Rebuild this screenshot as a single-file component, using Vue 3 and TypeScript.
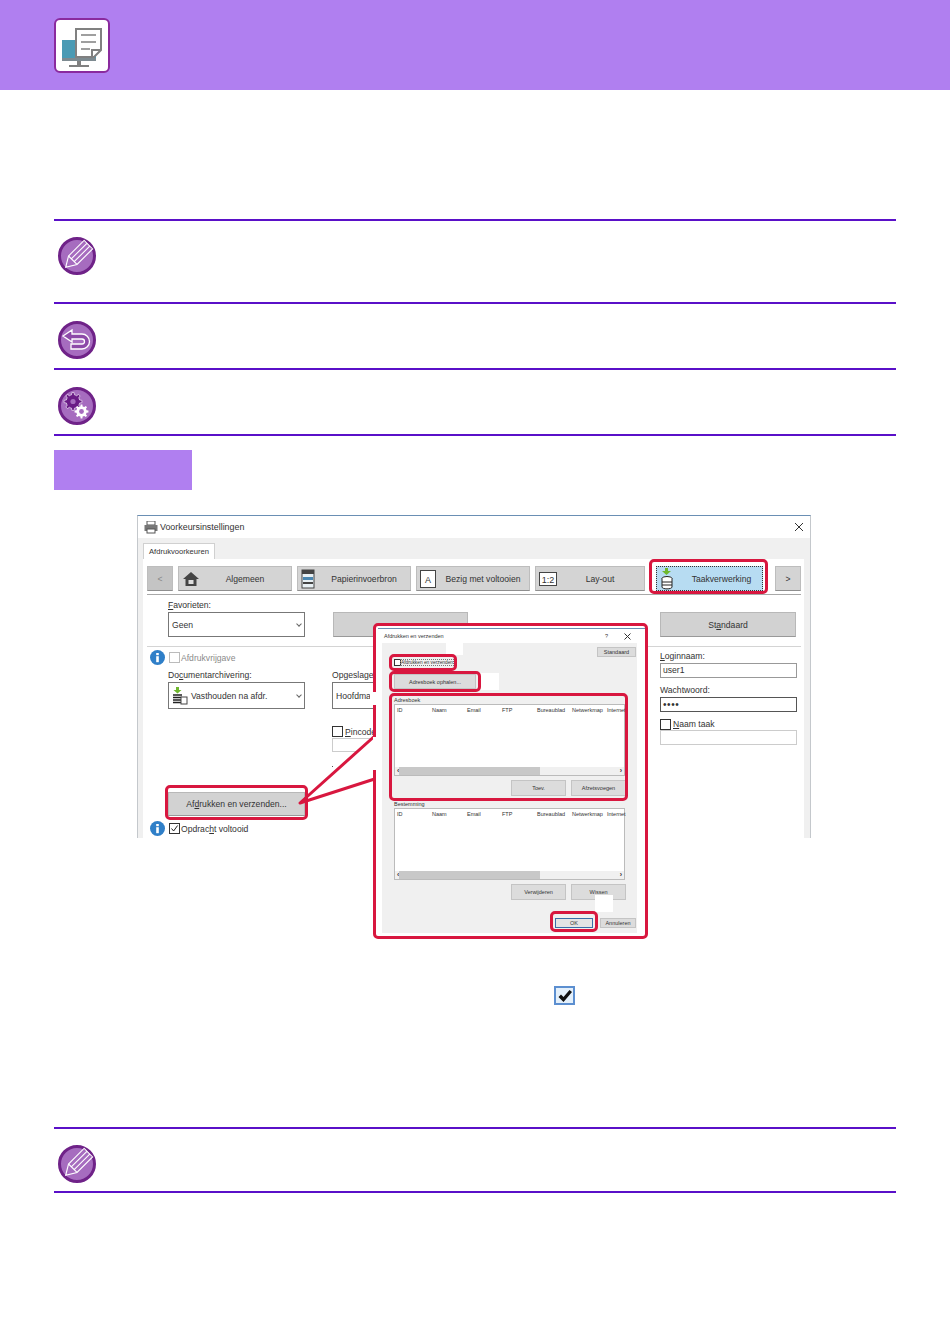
<template>
  <div class="page">
    <header class="topbar">
      <div class="topbar-icon">
        <svg width="52" height="52" viewBox="0 0 52 52">
          <rect x="6" y="20" width="34" height="20" fill="#4a9ab4" />
          <rect x="6" y="38" width="34" height="3" fill="#7d8a90" />
          <rect x="21" y="41" width="4" height="4" fill="#808080" />
          <rect x="13" y="45" width="20" height="2" fill="#808080" />
          <path d="M20 9H45V30L38 37H20Z" fill="#fff" stroke="#808080" stroke-width="2" />
          <path d="M25 15H40M25 22H40M25 29H34" stroke="#808080" stroke-width="1.6" />
          <path d="M36 37V30H45" fill="none" stroke="#808080" stroke-width="2" />
        </svg>
      </div>
    </header>

    <main class="content">
      <section class="note note-tall">
        <svg class="badge" viewBox="0 0 38 38">
          <circle cx="19" cy="19" r="17.5" fill="#a66cbf" stroke="#6f2288" stroke-width="3" />
          <g transform="rotate(45 19 19)" fill="none" stroke="#fff" stroke-width="1.1">
            <path d="M13 3H25V25L19 35L13 25Z" />
            <path d="M17 3V25M21 3V25M13 25H25" />
          </g>
        </svg>
      </section>
      <section class="note">
        <svg class="badge" viewBox="0 0 38 38">
          <circle cx="19" cy="19" r="17.5" fill="#a66cbf" stroke="#6f2288" stroke-width="3" />
          <path d="M5 15L14 9V13H24A7.5 7.5 0 0 1 24 28H13V23H24A2.5 2.5 0 0 0 24 18H14V21Z" fill="#8d4aa8" stroke="#fff" stroke-width="1.3" />
        </svg>
      </section>
      <section class="note">
        <svg class="badge" viewBox="0 0 38 38">
          <circle cx="19" cy="19" r="17.5" fill="#a66cbf" stroke="#6f2288" stroke-width="3" />
          <path :d="bigGear" fill="#6a1b86" stroke="#fff" stroke-width="0.6" />
          <circle cx="15" cy="14.5" r="2.6" fill="#a66cbf" />
          <path :d="smallGear" fill="#fff" />
          <circle cx="23.5" cy="24.5" r="2.4" fill="#a66cbf" />
        </svg>
      </section>
      <div class="rule"></div>

      <div class="section-tag"></div>

      <div class="figure">
        <div class="window">
          <div class="titlebar">
            <svg class="title-icon" width="14" height="13" viewBox="0 0 14 13">
              <rect x="3" y="0" width="8" height="4" fill="#fff" stroke="#555" />
              <rect x="0.5" y="4" width="13" height="6" fill="#777" />
              <rect x="3" y="8" width="8" height="4" fill="#fff" stroke="#555" />
            </svg>
            <span>Voorkeursinstellingen</span>
            <svg class="close" width="10" height="10" viewBox="0 0 10 10">
              <path d="M1 1L9 9M9 1L1 9" stroke="#333" stroke-width="1" />
            </svg>
          </div>
          <div class="tabstrip">
            <div class="tab">Afdrukvoorkeuren</div>
          </div>
          <div class="panel">
            <div class="nav">
              <button class="nav-arrow disabled">&lt;</button>
              <button v-for="item in navItems" :key="item.label" class="nav-item" :style="{ width: item.width + 'px' }">
                <svg v-if="item.icon === 'home'" class="nav-icon" width="18" height="18" viewBox="0 0 18 18">
                  <path d="M1 9L9 2L17 9H14.5V16H3.5V9Z" fill="#444" />
                  <rect x="6.5" y="10" width="5" height="4" fill="#ddd" />
                </svg>
                <svg v-else-if="item.icon === 'paper'" class="nav-icon" width="14" height="20" viewBox="0 0 14 20">
                  <rect x="1" y="1" width="12" height="18" fill="#e8f0f4" stroke="#444" />
                  <rect x="1" y="1" width="12" height="4" fill="#444" />
                  <rect x="2" y="8" width="10" height="3" fill="#4a86b0" />
                  <rect x="2" y="13" width="10" height="2" fill="#444" />
                </svg>
                <svg v-else-if="item.icon === 'finish'" class="nav-icon" width="16" height="18" viewBox="0 0 16 18">
                  <rect x="0.5" y="0.5" width="15" height="17" fill="#fff" stroke="#444" />
                  <text x="8" y="13" text-anchor="middle" class="nav-icon-text">A</text>
                </svg>
                <svg v-else class="nav-icon" width="18" height="14" viewBox="0 0 18 14">
                  <rect x="0.5" y="0.5" width="17" height="13" fill="#fff" stroke="#444" />
                  <text x="9" y="10.5" text-anchor="middle" class="nav-icon-text">1:2</text>
                </svg>
                <span class="nav-label">{{ item.label }}</span>
              </button>
              <button class="nav-item nav-active">
                <svg class="nav-icon" width="14" height="22" viewBox="0 0 14 22">
                  <path d="M5 0H8V3H11L6.5 7L2 3H5Z" fill="#6fb82e" />
                  <ellipse cx="7" cy="10.5" rx="5" ry="2" fill="#fff" stroke="#222" />
                  <path d="M2 10.5V19C2 21.5 12 21.5 12 19V10.5M2 14H12M2 17H12" fill="#fff" stroke="#222" />
                </svg>
                <span class="nav-label">Taakverwerking</span>
              </button>
              <button class="nav-arrow nav-next">&gt;</button>
            </div>

            <div class="settings-top">
              <div class="col-left">
                <label class="field-label"><u>F</u>avorieten:</label>
                <div class="select">Geen<span class="chev"></span></div>
              </div>
              <div class="col-mid">
                <div class="gray-btn wide"></div>
              </div>
              <div class="col-right">
                <div class="gray-btn wide">St<u>a</u>ndaard</div>
              </div>
            </div>

            <div class="settings-main">
              <div class="main-left">
                <div class="check-row">
                  <svg class="info" width="15" height="15" viewBox="0 0 15 15">
                    <circle cx="7.5" cy="7.5" r="7.5" fill="#2f7fc8" />
                    <rect x="6.2" y="6.2" width="2.6" height="6" fill="#fff" />
                    <rect x="6.2" y="3" width="2.6" height="2.2" fill="#fff" />
                  </svg>
                  <span class="box box-off"></span>
                  <span class="muted">Afdrukvrijgave</span>
                </div>
                <div class="indent">
                  <label class="field-label">Do<u>c</u>umentarchivering:</label>
                  <div class="select select-tall">
                    <svg class="doc-icon" width="16" height="18" viewBox="0 0 16 18">
                      <path d="M4 0H7V3H9.5L5.5 6.5L1.5 3H4Z" fill="#6fb82e" />
                      <path d="M1 8H10M1 10.5H10M1 13H10M1 15.5H10" stroke="#222" stroke-width="1.4" />
                      <rect x="9" y="10" width="6" height="7" fill="#fff" stroke="#444" />
                    </svg>
                    Vasthouden na afdr.<span class="chev"></span>
                  </div>
                  <div class="gray-btn send-btn">Af<u>d</u>rukken en verzenden...</div>
                </div>
                <div class="check-row done-row">
                  <svg class="info" width="15" height="15" viewBox="0 0 15 15">
                    <circle cx="7.5" cy="7.5" r="7.5" fill="#2f7fc8" />
                    <rect x="6.2" y="6.2" width="2.6" height="6" fill="#fff" />
                    <rect x="6.2" y="3" width="2.6" height="2.2" fill="#fff" />
                  </svg>
                  <span class="box"><svg width="9" height="9" viewBox="0 0 9 9"><path d="M1.5 4.5L3.6 7L7.6 1.5" fill="none" stroke="#222" /></svg></span>
                  <span>Opdrac<u>h</u>t voltooid</span>
                </div>
              </div>
              <div class="main-mid">
                <label class="field-label">Opgeslagen in:</label>
                <div class="select select-tall">Hoofdmap</div>
                <div class="pin-row"><span class="box"></span><span><u>P</u>incode</span></div>
                <div class="input pin-input"></div>
                <div class="pin-dot"></div>
              </div>
              <div class="main-right">
                <label class="field-label"><u>L</u>oginnaam:</label>
                <div class="input">user1</div>
                <label class="field-label spaced">Wachtwoord:</label>
                <div class="input input-dark">••••</div>
                <div class="name-row"><span class="box"></span><span><u>N</u>aam taak</span></div>
                <div class="input input-light"></div>
              </div>
            </div>
          </div>
        </div>

        <svg class="callout" width="260" height="110" viewBox="0 0 260 110">
          <path d="M163 98L250 20V70Z" fill="#fff" stroke="#d8173f" stroke-width="3" stroke-linejoin="round" />
        </svg>
        <div class="mark mark-tab"></div>
        <div class="mark mark-send"></div>

        <div class="dialog">
          <div class="dialog-title">
            <span>Afdrukken en verzenden</span>
            <span class="dialog-tools"><i>?</i><svg width="7" height="7" viewBox="0 0 7 7"><path d="M0.5 0.5L6.5 6.5M6.5 0.5L0.5 6.5" stroke="#333" /></svg></span>
          </div>
          <div class="dialog-body">
            <div class="mini-btn std-btn">Standaard</div>
            <div class="mini-check"><span class="box mini-box"></span><span class="focus">Afdrukken en verzenden</span></div>
            <div class="mini-btn book-btn">Adresboek ophalen...</div>

            <div class="group-label">Adresboek</div>
            <div class="listbox">
              <div class="list-head"><span v-for="h in columns" :key="h">{{ h }}</span></div>
              <div class="scroll"><b>‹</b><span class="thumb"></span><b>›</b></div>
            </div>
            <div class="list-actions">
              <div class="mini-btn act-btn">Toev.</div>
              <div class="mini-btn act-btn">Afzetsvoegen</div>
            </div>

            <div class="group-label second">Bestemming</div>
            <div class="listbox">
              <div class="list-head"><span v-for="h in columns" :key="h">{{ h }}</span></div>
              <div class="scroll"><b>‹</b><span class="thumb"></span><b>›</b></div>
            </div>
            <div class="list-actions">
              <div class="mini-btn act-btn">Verwijderen</div>
              <div class="mini-btn act-btn">Wissen</div>
            </div>

            <div class="dialog-foot">
              <div class="mini-btn ok-btn">OK</div>
              <div class="mini-btn cancel-btn">Annuleren</div>
            </div>
          </div>
          <div class="blank blank-a"></div>
          <div class="blank blank-b"></div>
          <div class="blank blank-c"></div>
          <div class="blank blank-d"></div>
          <div class="blank blank-e"></div>
          <div class="mark mark-check"></div>
          <div class="mark mark-book"></div>
          <div class="mark mark-list"></div>
          <div class="mark mark-ok"></div>
        </div>
      </div>

      <div class="check-sample">
        <svg width="16" height="14" viewBox="0 0 16 14">
          <path d="M1.5 8L4 5.5L6.5 8L12.5 1L15 3L6.5 13Z" fill="#111" />
        </svg>
      </div>

      <section class="note note-last">
        <svg class="badge" viewBox="0 0 38 38">
          <circle cx="19" cy="19" r="17.5" fill="#a66cbf" stroke="#6f2288" stroke-width="3" />
          <g transform="rotate(45 19 19)" fill="none" stroke="#fff" stroke-width="1.1">
            <path d="M13 3H25V25L19 35L13 25Z" />
            <path d="M17 3V25M21 3V25M13 25H25" />
          </g>
        </svg>
      </section>
      <div class="rule"></div>
    </main>
  </div>
</template>

<script setup lang="ts">
interface NavItem {
  label: string
  width: number
  icon: string
}

const navItems: NavItem[] = [
  { label: 'Algemeen', width: 114, icon: 'home' },
  { label: 'Papierinvoerbron', width: 114, icon: 'paper' },
  { label: 'Bezig met voltooien', width: 114, icon: 'finish' },
  { label: 'Lay-out', width: 110, icon: 'layout' },
]

const columns = ['ID', 'Naam', 'Email', 'FTP', 'Bureaublad', 'Netwerkmap', 'Internet']

function gear(cx: number, cy: number, outer: number, inner: number, teeth: number) {
  const pts: string[] = []
  const step = (Math.PI * 2) / teeth
  for (let i = 0; i < teeth; i++) {
    const a = i * step
    const list: [number, number][] = [
      [inner, a - step * 0.5],
      [inner, a - step * 0.28],
      [outer, a - step * 0.16],
      [outer, a + step * 0.16],
      [inner, a + step * 0.28],
    ]
    list.forEach(([r, t]) => {
      pts.push((cx + r * Math.cos(t)).toFixed(2) + ' ' + (cy + r * Math.sin(t)).toFixed(2))
    })
  }
  return 'M' + pts.join('L') + 'Z'
}

const bigGear = gear(15, 14.5, 9, 6.8, 8)
const smallGear = gear(23.5, 24.5, 7, 5.2, 8)
</script>

<style>
html,
body {
  margin: 0;
  background: #fff;
}
</style>

<style scoped>
.page {
  width: 950px;
  height: 1344px;
  overflow: hidden;
  background: #fff;
  font-family: "Liberation Sans", Arial, sans-serif;
  font-size: 8.6px;
  color: #333;
}

u {
  text-decoration-thickness: 1px;
}

.topbar {
  height: 90px;
  background: #b07ff0;
  padding: 18px 0 0 54px;
  box-sizing: border-box;
}

.topbar-icon {
  width: 56px;
  height: 55px;
  box-sizing: border-box;
  background: #fff;
  border: 2px solid #8a2a9e;
  border-radius: 6px;
}

.content {
  padding: 129px 54px 0;
}

.note {
  display: flex;
  align-items: flex-start;
  box-sizing: border-box;
  height: 66px;
  padding: 17px 0 0 4px;
  border-top: 2px solid #5a10c8;
}

.note-tall {
  height: 83px;
  padding-top: 16px;
}

.note-last {
  height: 64px;
  padding-top: 16px;
  margin-top: 122px;
}

.badge {
  width: 38px;
  height: 38px;
}

.rule {
  height: 2px;
  background: #5a10c8;
}

.section-tag {
  width: 138px;
  height: 40px;
  margin-top: 14px;
  background: #b07ff0;
}

.figure {
  position: relative;
  width: 674px;
  height: 424px;
  margin: 25px 0 0 83px;
}

.window {
  width: 674px;
  height: 323px;
  box-sizing: border-box;
  overflow: hidden;
  background: #f0f0f0;
  border: 1px solid #c4c8cc;
  border-top-color: #6a8fb4;
  border-bottom: 0;
}

.titlebar {
  display: flex;
  align-items: center;
  gap: 2px;
  height: 22px;
  padding: 0 6px 0 6px;
  background: #fff;
  font-size: 8.9px;
}

.close {
  margin-left: auto;
}

.tabstrip {
  display: flex;
  height: 21px;
  padding: 5px 0 0 5px;
  box-sizing: border-box;
}

.tab {
  width: 72px;
  height: 16px;
  box-sizing: border-box;
  background: #fff;
  border: 1px solid #d0d0d0;
  border-bottom: 0;
  font-size: 7.6px;
  line-height: 15px;
  text-align: center;
}

.panel {
  width: 661px;
  height: 279px;
  margin-left: 5px;
  background: #fff;
  overflow: hidden;
}

.nav {
  display: flex;
  align-items: center;
  height: 25px;
  margin: 7px 3px 0 4px;
  gap: 5px;
}

.nav button {
  height: 25px;
  padding: 0;
  font: inherit;
  color: #333;
  background: #d4d4d4;
  border: 1px solid #bdbdbd;
  border-bottom-color: #8f8f8f;
}

.nav-arrow {
  width: 26px;
  flex: none;
}

.nav-arrow.disabled {
  background: #c4c4c4;
  color: #888;
}

.nav-next {
  margin-left: 7px;
}

.nav-item {
  position: relative;
  display: flex;
  align-items: center;
  flex: none;
}

.nav-icon {
  position: absolute;
  left: 3px;
  top: 50%;
  transform: translateY(-50%);
}

.nav-icon-text {
  font-size: 9px;
  fill: #333;
  font-family: "Liberation Sans", sans-serif;
}

.nav-label {
  flex: 1;
  padding-left: 20px;
  text-align: center;
}

.nav button.nav-active {
  width: 107px;
  margin-left: 6px;
  background: #b7dcf2;
  border: 1px dotted #333;
}

.nav-active .nav-label {
  padding-left: 24px;
}

.settings-top {
  display: flex;
  height: 53px;
  box-sizing: border-box;
  margin: 3px 3px 0 4px;
  padding: 4px 0 0 21px;
  border-top: 1px solid #a8a8a8;
  border-bottom: 1px solid #d4d4d4;
}

.field-label {
  display: block;
  height: 13px;
  line-height: 13px;
}

.col-left {
  width: 165px;
}

.col-mid {
  width: 327px;
  padding-top: 13px;
}

.col-mid .wide {
  width: 135px;
}

.col-right {
  padding-top: 13px;
}

.col-right .wide {
  width: 136px;
}

.select {
  position: relative;
  display: flex;
  align-items: center;
  width: 137px;
  height: 25px;
  box-sizing: border-box;
  padding-left: 3px;
  border: 1px solid #777;
  background: #fff;
}

.select-tall {
  height: 27px;
}

.chev {
  position: absolute;
  right: 3px;
  top: 50%;
  width: 3px;
  height: 3px;
  margin-top: -3px;
  border-right: 1px solid #666;
  border-bottom: 1px solid #666;
  transform: rotate(45deg);
}

.doc-icon {
  margin-right: 3px;
}

.gray-btn {
  display: flex;
  align-items: center;
  justify-content: center;
  height: 25px;
  box-sizing: border-box;
  background: #d2d2d2;
  border: 1px solid #b8b8b8;
  border-bottom-color: #999;
}

.settings-main {
  display: flex;
  height: 190px;
  padding-left: 7px;
}

.main-left {
  width: 182px;
  padding-top: 3px;
}

.check-row {
  display: flex;
  align-items: center;
  height: 15px;
  gap: 4px;
}

.check-row .box + span {
  margin-left: -3px;
}

.indent {
  margin: 4px 0 0 18px;
}

.box {
  display: inline-flex;
  flex: none;
  width: 9px;
  height: 9px;
  box-sizing: content-box;
  border: 1px solid #333;
  background: #fff;
}

.box-off {
  border-color: #bbb;
}

.muted {
  color: #8a8a8a;
}

.send-btn {
  width: 137px;
  height: 24px;
  margin-top: 83px;
}

.done-row {
  margin-top: 5px;
}

.main-mid {
  width: 328px;
  padding-top: 22px;
}

.pin-row,
.name-row {
  display: flex;
  align-items: center;
  gap: 2px;
  height: 13px;
}

.pin-row {
  margin-top: 16px;
}

.pin-input {
  width: 50px;
  height: 14px !important;
  border-color: #ccc !important;
}

.pin-dot {
  width: 1px;
  height: 1px;
  margin-top: 14px;
  background: #555;
}

.main-right {
  width: 137px;
  padding-top: 3px;
}

.input {
  height: 15px;
  box-sizing: border-box;
  padding-left: 2px;
  line-height: 13px;
  border: 1px solid #999;
  background: #fff;
}

.input-dark {
  border-color: #555;
  font-size: 10px;
  letter-spacing: 0.6px;
}

.input-light {
  border-color: #ccc;
}

.spaced {
  margin-top: 6px;
}

.name-row {
  height: 12px;
  margin-top: 6px;
}

.callout {
  position: absolute;
  left: 0;
  top: 190px;
}

.mark {
  position: absolute;
  box-sizing: border-box;
  border: 3px solid #d8173f;
  border-radius: 5px;
}

.mark-tab {
  left: 512px;
  top: 44px;
  width: 119px;
  height: 35px;
}

.mark-send {
  left: 28px;
  top: 270px;
  width: 143px;
  height: 35px;
}

.dialog {
  position: absolute;
  left: 236px;
  top: 108px;
  width: 275px;
  height: 316px;
  box-sizing: border-box;
  padding: 2px 8px 0 6px;
  background: #fff;
  border: 3px solid #d8173f;
  border-radius: 5px;
  font-size: 5.5px;
}

.dialog-title {
  display: flex;
  justify-content: space-between;
  align-items: center;
  height: 15px;
  box-sizing: border-box;
  margin: 0 -8px 0 -4px;
  border-top: 1px solid #6a8fb4;
  padding: 0 14px 0 6px;
}

.dialog-tools {
  display: flex;
  align-items: center;
  gap: 16px;
}

.dialog-tools i {
  font-style: normal;
}

.dialog-body {
  position: relative;
  height: 290px;
  box-sizing: border-box;
  padding: 4px 0 0 12px;
  background: #f0f0f0;
}

.mini-btn {
  display: flex;
  align-items: center;
  justify-content: center;
  box-sizing: border-box;
  background: #dcdcdc;
  border: 1px solid #c4c4c4;
}

.std-btn {
  width: 39px;
  height: 10px;
  margin-left: 203px;
}

.mini-check {
  display: flex;
  align-items: center;
  height: 10px;
  gap: 0;
  white-space: nowrap;
}

.mini-box {
  width: 5px;
  height: 5px;
}

.focus {
  font-size: 4.8px;
  outline: 1px dotted #777;
}

.book-btn {
  width: 82px;
  height: 15px;
  margin-top: 7px;
}

.group-label {
  height: 8px;
  margin-top: 7px;
  line-height: 8px;
}

.group-label.second {
  margin-top: 4px;
}

.listbox {
  position: relative;
  width: 231px;
  height: 72px;
  box-sizing: border-box;
  background: #fff;
  border: 1px solid #bbb;
}

.list-head {
  display: flex;
  padding: 2px 0 0 2px;
  white-space: nowrap;
}

.list-head span {
  flex: 0 0 35px;
}

.scroll {
  position: absolute;
  left: 0;
  right: 0;
  bottom: 0;
  display: flex;
  align-items: center;
  justify-content: space-between;
  height: 8px;
  padding: 0 2px;
  background: #f0f0f0;
  font-weight: 400;
}

.scroll b {
  font-weight: 700;
  font-size: 7px;
  line-height: 8px;
}

.thumb {
  width: 141px;
  height: 8px;
  margin-right: 80px;
  background: #c8c8c8;
}

.list-actions {
  display: flex;
  gap: 5px;
  margin: 4px 0 0 117px;
}

.act-btn {
  width: 55px;
  height: 16px;
}

.dialog-foot {
  display: flex;
  gap: 7px;
  margin: 18px 0 0 161px;
}

.ok-btn {
  width: 38px;
  height: 10px;
  background: #e4e4e4;
  border-color: #3a6ea8;
}

.cancel-btn {
  width: 36px;
  height: 10px;
}

.blank {
  position: absolute;
  background: #fff;
}

.blank-a {
  left: 70px;
  top: 17px;
  width: 17px;
  height: 12px;
}

.blank-b {
  left: 104px;
  top: 47px;
  width: 19px;
  height: 17px;
}

.blank-c {
  left: 219px;
  top: 269px;
  width: 18px;
  height: 17px;
}

.blank-d {
  left: -6px;
  top: 66px;
  width: 12px;
  height: 13px;
}

.blank-e {
  left: -3px;
  top: 111px;
  width: 4px;
  height: 33px;
}

.mark-check {
  left: 13px;
  top: 28px;
  width: 68px;
  height: 17px;
}

.mark-book {
  left: 13px;
  top: 45px;
  width: 92px;
  height: 21px;
}

.mark-list {
  left: 13px;
  top: 67px;
  width: 239px;
  height: 108px;
}

.mark-ok {
  left: 174px;
  top: 285px;
  width: 48px;
  height: 21px;
}

.check-sample {
  display: flex;
  align-items: center;
  justify-content: center;
  width: 21px;
  height: 19px;
  box-sizing: border-box;
  margin: 47px 0 0 500px;
  background: #e4f0fb;
  border: 2px solid #5c8fd0;
}
</style>
